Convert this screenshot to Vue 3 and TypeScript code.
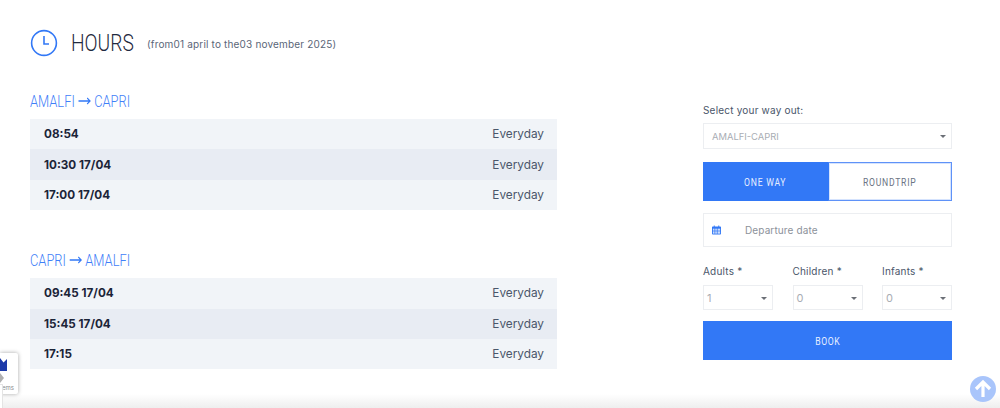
<script setup lang="ts">
interface Row { time: string; days: string }
interface Route { title: [string, string]; rows: Row[] }

const routes: Route[] = [
  {
    title: ['AMALFI', 'CAPRI'],
    rows: [
      { time: '08:54', days: 'Everyday' },
      { time: '10:30 17/04', days: 'Everyday' },
      { time: '17:00 17/04', days: 'Everyday' },
    ],
  },
  {
    title: ['CAPRI', 'AMALFI'],
    rows: [
      { time: '09:45 17/04', days: 'Everyday' },
      { time: '15:45 17/04', days: 'Everyday' },
      { time: '17:15', days: 'Everyday' },
    ],
  },
]

const people = [
  { label: 'Adults *', value: '1' },
  { label: 'Children *', value: '0' },
  { label: 'Infants *', value: '0' },
]
</script>

<template>
  <div class="page">
    <header class="head">
      <svg class="clock" width="28" height="28" viewBox="0 0 28 28" fill="none" stroke="#3278f6" stroke-width="1.6">
        <circle cx="14" cy="14" r="12.4" />
        <path d="M14 7v8h5" />
      </svg>
      <h1>HOURS</h1>
      <span class="period">(from01 april to the03 november 2025)</span>
    </header>

    <div class="cols">
      <main class="left">
        <section v-for="route in routes" :key="route.title[0]" class="route">
          <h2>
            <span>{{ route.title[0] }}</span>
            <svg width="16" height="8" viewBox="0 0 16 8" fill="none" stroke="#3278f6" stroke-width="1.3">
              <path d="M0 4h14.500M11 1l3.600 3-3.600 3" />
            </svg>
            <span>{{ route.title[1] }}</span>
          </h2>
          <div v-for="row in route.rows" :key="row.time" class="row">
            <strong>{{ row.time }}</strong>
            <span>{{ row.days }}</span>
          </div>
        </section>
      </main>

      <aside class="form">
        <label class="lbl first">Select your way out:</label>
        <div class="select wide">
          <span>AMALFI-CAPRI</span>
          <i class="caret"></i>
        </div>

        <div class="toggle">
          <button class="on"><span class="narrow">ONE WAY</span></button>
          <button class="off"><span class="narrow">ROUNDTRIP</span></button>
        </div>

        <div class="date">
          <svg width="9" height="10" viewBox="0 0 10 10" fill="#3278f6">
            <path d="M2 0h1v1h4V0h1v1h1.200c.4 0 .8.4.8.8v7.400c0 .4-.4.8-.8.8H.8C.4 10 0 9.600 0 9.200V1.800C0 1.400.4 1 .8 1H2zM1 3.500v1.300h1.800V3.500zm2.600 0v1.300h1.800V3.500zm2.600 0v1.300H9V3.500H6.200zM1 5.500v1.300h1.800V5.500zm2.600 0v1.300h1.800V5.500zm2.600 0v1.300H9V5.500H6.200zM1 7.500v1.300h1.800V7.500zm2.600 0v1.300h1.800V7.500zm2.600 0v1.300H9V7.500H6.200z" />
          </svg>
          <span>Departure date</span>
        </div>

        <div class="people">
          <div v-for="p in people" :key="p.label" class="person">
            <label class="lbl">{{ p.label }}</label>
            <div class="select small">
              <span>{{ p.value }}</span>
              <i class="caret"></i>
            </div>
          </div>
        </div>

        <button class="book"><span class="narrow">BOOK</span></button>
      </aside>
    </div>

    <div class="shade"></div>

    <div class="recaptcha">
      <svg width="18" height="32" viewBox="0 0 18 32">
        <path d="M0 5l3.500 4.500L7 6v12H0z" fill="#1c3aa9" />
        <path d="M0 20l4 5-4 5z" fill="#b0b0b0" />
      </svg>
      <span>ems</span>
    </div>
    <div class="terms"></div>

    <div class="up">
      <svg width="20" height="20" viewBox="0 0 20 20" fill="none" stroke="#fff" stroke-width="3.200">
        <path d="M10 18V3M3 10l7-7 7 7" />
      </svg>
    </div>
  </div>
</template>

<style>
html,
body {
  margin: 0;
  background: #fff;
}
</style>

<style scoped>
.page {
  position: relative;
  width: 1000px;
  height: 408px;
  overflow: hidden;
  box-sizing: border-box;
  padding: 29px 48px 0 30px;
  background: #fff;
  font-family: 'Inter', 'Liberation Sans', sans-serif;
  color: #3b4860;
}

.head {
  display: flex;
  align-items: center;
  height: 28px;
}
.clock {
  margin-right: 13px;
}
h1 {
  width: 62px;
  margin: 0 14px 0 0;
  font-family: 'Roboto', sans-serif;
  font-weight: 300;
  font-size: 24px;
  color: #1f2a40;
  transform: scaleX(0.8);
  transform-origin: left center;
}
.period {
  font-size: 10px;
  letter-spacing: 0.17px;
  color: #5a6678;
  margin-top: 2px;
}

.cols {
  display: flex;
  justify-content: space-between;
  margin-top: 35px;
}
.left {
  width: 527px;
}
.route {
  margin-bottom: 41px;
}
h2 {
  display: flex;
  align-items: center;
  gap: 4px;
  height: 20px;
  margin: -1px 0 8px;
  font-family: 'Roboto', sans-serif;
  font-weight: 300;
  font-size: 16px;
  color: #3f80f8;
  transform: scaleX(0.805);
  transform-origin: left center;
}
.row {
  display: flex;
  justify-content: space-between;
  align-items: center;
  height: 30.400px;
  padding: 0 13px 0 14px;
  background: #f1f4f8;
  font-size: 11.800px;
  color: #4a566a;
}
.row:nth-child(odd) {
  background: #e8ecf3;
}
.row strong {
  font-weight: 700;
  font-size: 11.700px;
  color: #1c2438;
}

.form {
  width: 249px;
  margin-top: 11px;
  font-size: 10px;
}
.lbl {
  display: block;
  font-size: 10px;
  letter-spacing: 0.2px;
  color: #4a566a;
  line-height: 13px;
  margin-bottom: 7px;
}
.lbl.first {
  margin-top: 1px;
  margin-bottom: 6px;
}
.select {
  position: relative;
  display: flex;
  align-items: center;
  box-sizing: border-box;
  border: 1px solid #eceef1;
  color: #a9adb4;
}
.select.wide {
  height: 26px;
  padding-left: 8px;
  font-size: 9.400px;
}
.select.small {
  height: 25px;
  padding-left: 3px;
  font-size: 11px;
}
.caret {
  position: absolute;
  right: 5px;
  top: 50%;
  margin-top: -1px;
  border: 3px solid transparent;
  border-top: 3px solid #6b6f76;
  border-bottom: 0;
}

.toggle {
  display: flex;
  height: 39px;
  margin-top: 13px;
}
.toggle button {
  flex: 1;
  padding: 0;
  font-family: 'Roboto', sans-serif;
  font-size: 11.500px;
  letter-spacing: 1px;
  border: 1px solid #3278f6;
}
.narrow {
  display: inline-block;
  transform: scaleX(0.75);
}
.toggle .on {
  background: #3278f6;
  color: #e6eeff;
}
.toggle .off {
  background: #fff;
  color: #6b7484;
  border-color: #5f92f8;
  border-left-color: #3278f6;
  box-shadow: inset 0 0 0 1px #d5e3fd;
}

.date {
  display: flex;
  align-items: center;
  box-sizing: border-box;
  height: 34px;
  margin-top: 12px;
  padding-left: 8px;
  border: 1px solid #eceef1;
  color: #8c919a;
  letter-spacing: 0.12px;
}
.date svg {
  margin-right: 24px;
}

.people {
  display: flex;
  justify-content: space-between;
  margin-top: 18px;
}
.person {
  width: 70px;
}

.book {
  display: block;
  width: 100%;
  height: 39px;
  margin-top: 11px;
  padding: 0;
  border: 1px solid #3278f6;
  background: #3278f6;
  color: #e6eeff;
  font-family: 'Roboto', sans-serif;
  font-size: 11.500px;
  letter-spacing: 0.8px;
}

.shade {
  position: absolute;
  left: 0;
  right: 0;
  bottom: 0;
  height: 14px;
  background: linear-gradient(to bottom, rgba(238, 238, 238, 0), #eeeeee);
}
.recaptcha {
  position: absolute;
  left: 0;
  top: 353px;
  width: 18px;
  height: 41px;
  overflow: hidden;
  background: #fff;
  box-shadow: 0 0 4px rgba(0, 0, 0, 0.35);
  border-radius: 0 2px 2px 0;
}
.recaptcha svg {
  display: block;
}
.recaptcha span {
  position: absolute;
  left: 2px;
  bottom: 3px;
  font-size: 6px;
  color: #8b8b8b;
}
.terms {
  position: absolute;
  left: 0;
  top: 384px;
  width: 2px;
  height: 24px;
  background: #fff;
  border: 1px solid #e4e4e4;
  border-left: 0;
}
.up {
  position: absolute;
  left: 970px;
  top: 376px;
  width: 26px;
  height: 26px;
  display: flex;
  align-items: center;
  justify-content: center;
  border-radius: 50%;
  background: #a9c5fb;
}
</style>
